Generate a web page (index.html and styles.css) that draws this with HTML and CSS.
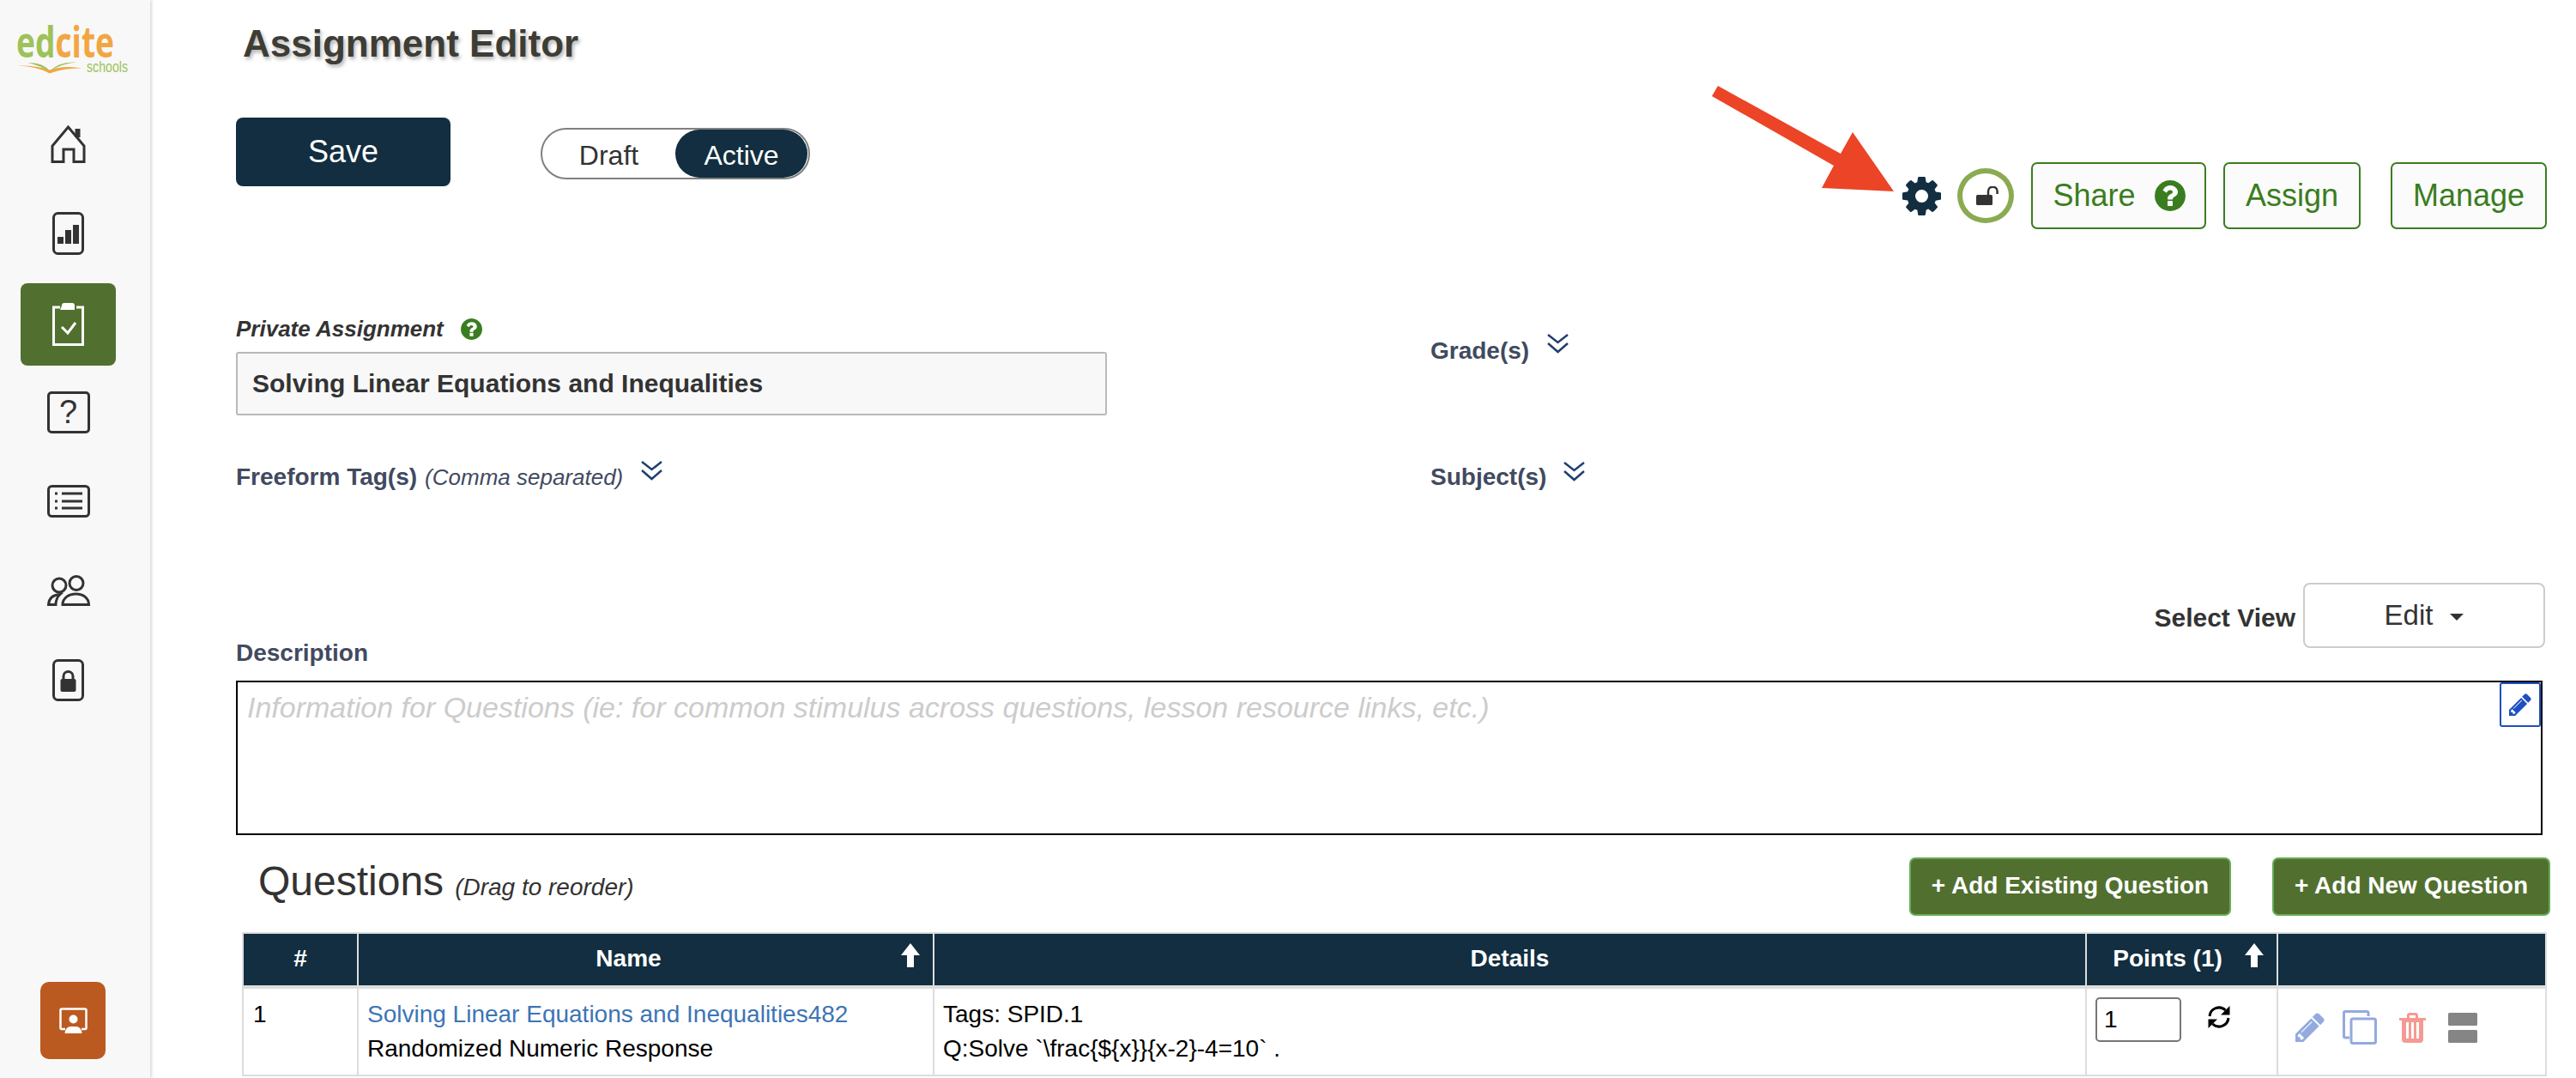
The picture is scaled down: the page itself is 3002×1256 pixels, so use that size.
FILE: index.html
```html
<!DOCTYPE html>
<html lang="en">
<head>
<meta charset="utf-8">
<title>Assignment Editor</title>
<link rel="stylesheet" href="styles.css">
</head>
<body>
<div class="app">
  <aside class="sidebar">
    <svg class="logo" viewBox="0 0 175 116" width="175" height="116">
      <text class="logo-word" x="19" y="67" textLength="114" lengthAdjust="spacingAndGlyphs"><tspan class="logo-ed">ed</tspan><tspan class="logo-cite">cite</tspan></text>
      <text class="logo-sub" x="101" y="84" textLength="48" lengthAdjust="spacingAndGlyphs">schools</text>
      <path class="logo-orange" d="M20 76.500Q42 77 58 85.500Q74 79 96 79.500Q74 75.500 58 81.500Q42 76 20 76.500Z"/>
      <path class="logo-green" d="M33 73Q50 72.500 58 83Q47 77 33 73ZM58 83Q68 71.500 89 72.500Q72 74 58 83Z"/>
    </svg>
    <nav class="nav">
      <a class="nav-item">
        <svg class="ico" width="41" height="44" viewBox="0 0 41 44"><path d="M2 42.500V24L20.500 2L39 24V42.500H27V28H15V42.500Z"/><path class="thick" d="M31.500 4V14"/></svg>
      </a>
      <a class="nav-item">
        <svg class="ico" width="37" height="50" viewBox="0 0 37 50"><rect x="1.500" y="1.500" width="34" height="47" rx="5"/><path class="fill" d="M6 29h7v8H6zM15 21h7v16h-7zM24 15h7v22h-7z"/></svg>
      </a>
      <a class="nav-item nav-active">
        <svg class="ico ico-white" width="37" height="50" viewBox="0 0 37 50"><path d="M9 5H1.500V48.500H35.500V5H28"/><path class="fill" d="M11 3q0-3 3-3h9q3 0 3 3v5H9z"/><path d="M11 28l7 7L27 23"/></svg>
      </a>
      <a class="nav-item"><span class="q-box">?</span></a>
      <a class="nav-item">
        <svg class="ico" width="50" height="38" viewBox="0 0 50 38"><rect x="1.500" y="1.500" width="47" height="35" rx="4"/><path d="M17 10H41M17 19H41M17 27H41"/><path class="fill" d="M9 8.500h3v3H9zM9 17.500h3v3H9zM9 25.500h3v3H9z"/></svg>
      </a>
      <a class="nav-item">
        <svg class="ico" width="50" height="36" viewBox="0 0 50 36"><circle cx="14" cy="12" r="8"/><circle cx="34" cy="9.500" r="8"/><path d="M18 34.500C18 27 25 22 33.500 22S48.500 27 48.500 34.500Z"/><path d="M1.500 34.500C2 27 7 23 15 22.500Q10 27 10 34.500Z"/></svg>
      </a>
      <a class="nav-item">
        <svg class="ico" width="37" height="49" viewBox="0 0 37 49"><rect x="1.500" y="1.500" width="34" height="46" rx="5"/><path class="fill" d="M9.500 25q0-2 2-2h14q2 0 2 2v11q0 2-2 2h-14q-2 0-2-2z"/><path d="M13 24v-4a5.500 5.500 0 0 1 11 0v4"/></svg>
      </a>
    </nav>
    <a class="present-btn">
      <svg class="ico ico-white-thin" width="33" height="30" viewBox="0 0 33 30"><path d="M7 25H3Q1.500 25 1.500 23.500V3Q1.500 1.500 3 1.500H30Q31.500 1.500 31.500 3V23.500Q31.500 25 30 25H26"/><path class="fill" d="M6.500 30q1-8 7-8h6q6 0 7 8z"/><circle class="fill" cx="16.500" cy="13.500" r="5"/></svg>
    </a>
  </aside>

  <main class="main">
    <h1 class="page-title">Assignment Editor</h1>

    <div class="actions">
      <button class="save-btn">Save</button>
      <div class="toggle">
        <span class="toggle-seg">Draft</span>
        <span class="toggle-seg toggle-on">Active</span>
      </div>
      <div class="toolbar">
        <svg class="gear" width="45" height="45" viewBox="128 128 1536 1536"><path d="M1152 896q0-106-75-181t-181-75-181 75-75 181 75 181 181 75 181-75 75-181zm512-109v222q0 12-8 23t-20 13l-185 28q-19 54-39 91 35 50 107 138 10 12 10 25t-9 23q-27 37-99 108t-94 71q-12 0-26-9l-138-108q-44 23-91 38-16 136-29 186-7 28-36 28h-222q-14 0-24.500-8.500t-11.500-21.500l-28-184q-49-16-90-37l-141 107q-10 9-25 9-14 0-25-11-126-114-165-168-7-10-7-23 0-12 8-23 15-21 51-66.500t54-70.500q-27-50-41-99l-183-27q-13-2-21-12.500t-8-23.500v-222q0-12 8-23t19-13l186-28q14-46 39-92-40-57-107-138-10-12-10-24 0-10 9-23 26-36 98.500-107.500t94.500-71.500q13 0 26 10l138 107q44-23 91-38 16-136 29-186 7-28 36-28h222q14 0 24.500 8.500t11.500 21.500l28 184q49 16 90 37l142-107q9-9 24-9 13 0 25 10 129 119 165 170 7 8 7 22 0 12-8 23-15 21-51 66.500t-54 70.500q26 50 41 98l183 28q13 2 21 12.500t8 23.500z"/></svg>
        <span class="lock-ring">
          <svg width="26" height="22" viewBox="0 0 26 22"><rect x="0" y="10" width="19" height="12" rx="1.500" fill="#333"/><path d="M14 10V6a5.300 5.300 0 0 1 10.600 0V9" fill="none" stroke="#333" stroke-width="2.500"/></svg>
        </span>
        <a class="out-btn out-share">Share
          <svg class="help help-lg" viewBox="128 128 1536 1536"><use href="#q-circle"/></svg>
        </a>
        <a class="out-btn out-assign">Assign</a>
        <a class="out-btn out-manage">Manage</a>
      </div>
    </div>

    <div class="form-grid">
      <div class="form-left">
        <div class="label-row">
          <label class="label-private">Private Assignment</label>
          <svg class="help help-sm" viewBox="128 128 1536 1536"><path id="q-circle" d="M1024 1376v-192q0-14-9-23t-23-9h-192q-14 0-23 9t-9 23v192q0 14 9 23t23 9h192q14 0 23-9t9-23zm256-672q0-88-55.500-163t-138.500-116-170-41q-243 0-371 213-15 24 8 42l132 100q7 6 19 6 16 0 25-12 53-68 86-92 34-24 86-24 48 0 85.500 26t37.500 59q0 38-20 61t-68 45q-63 28-115.500 86.500t-52.500 125.500v36q0 14 9 23t23 9h192q14 0 23-9t9-23q0-19 21.500-49.500t54.500-49.500q32-18 49-28.500t46-35 44.500-48 28-60.500 12.500-81zm384 192q0 209-103 385.500t-279.500 279.500-385.500 103-385.500-103-279.500-279.500-103-385.500 103-385.500 279.500-279.500 385.500-103 385.500 103 279.500 279.500 103 385.500z"/></svg>
        </div>
        <div class="title-input">Solving Linear Equations and Inequalities</div>
        <div class="field-row field-tags">
          <span class="field-label">Freeform Tag(s)</span>
          <em class="field-note">(Comma separated)</em>
          <svg class="chev chev-tags" width="27" height="24" viewBox="0 0 27 24"><path d="M2 2L13.500 11L25 2M2 12L13.500 22L25 12"/></svg>
        </div>
      </div>
      <div class="form-right">
        <div class="field-row">
          <span class="field-label">Grade(s)</span>
          <svg class="chev chev-grade" width="27" height="24" viewBox="0 0 27 24"><path d="M2 2L13.500 11L25 2M2 12L13.500 22L25 12"/></svg>
        </div>
        <div class="field-row field-subject">
          <span class="field-label">Subject(s)</span>
          <svg class="chev chev-subject" width="27" height="24" viewBox="0 0 27 24"><path d="M2 2L13.500 11L25 2M2 12L13.500 22L25 12"/></svg>
        </div>
      </div>
    </div>

    <div class="view-row">
      <span class="field-label desc-label">Description</span>
      <div class="view-pick">
        <span class="view-label">Select View</span>
        <button class="view-btn">Edit<i class="caret"></i></button>
      </div>
    </div>

    <div class="desc-box">
      <span class="placeholder">Information for Questions (ie: for common stimulus across questions, lesson resource links, etc.)</span>
      <a class="desc-edit">
        <svg width="26" height="26" viewBox="128 128 1536 1536"><path d="M491 1536l91-91-235-235-91 91v107h128v128h107zm523-928q0-22-22-22-10 0-17 7l-542 542q-7 7-7 17 0 22 22 22 10 0 17-7l542-542q7-7 7-17zm-54-192l416 416-832 832h-416v-416zm683 96q0 53-37 90l-166 166-416-416 166-165q36-38 90-38 53 0 91 38l235 234q37 39 37 91z"/></svg>
      </a>
    </div>

    <div class="q-head">
      <h2 class="q-title">Questions<em class="q-note">(Drag to reorder)</em></h2>
      <a class="add-btn add-existing">+ Add Existing Question</a>
      <a class="add-btn add-new">+ Add New Question</a>
    </div>

    <table class="q-table">
      <colgroup>
        <col class="c-num"><col class="c-name"><col class="c-details"><col class="c-points"><col class="c-actions">
      </colgroup>
      <thead>
        <tr>
          <th>#</th>
          <th class="th-name">Name<svg class="sort" width="22" height="28" viewBox="0 0 22 28"><path d="M11 0L22 14H15V28H7V14H0Z"/></svg></th>
          <th>Details</th>
          <th class="th-points">Points (1)<svg class="sort" width="22" height="28" viewBox="0 0 22 28"><path d="M11 0L22 14H15V28H7V14H0Z"/></svg></th>
          <th></th>
        </tr>
      </thead>
      <tbody>
        <tr>
          <td class="td-num">1</td>
          <td><a class="q-link">Solving Linear Equations and Inequalities482</a><br>Randomized Numeric Response</td>
          <td>Tags: SPID.1<br>Q:Solve `\frac{${x}}{x-2}-4=10` .</td>
          <td class="td-points">
            <div class="points-wrap">
              <input class="points-input" type="text" value="1">
              <svg class="refresh" width="28" height="28" viewBox="0 0 28 28"><path d="M3 13A11 11 0 0 1 21.500 6"/><path d="M25 15A11 11 0 0 1 6.500 22"/><path class="fill" d="M26.500 1V11.500H16ZM1.500 27V16.500H12Z"/></svg>
            </div>
          </td>
          <td class="td-actions">
            <div class="row-icons">
              <svg class="i-pencil" width="34" height="34" viewBox="128 128 1536 1536"><path d="M491 1536l91-91-235-235-91 91v107h128v128h107zm523-928q0-22-22-22-10 0-17 7l-542 542q-7 7-7 17 0 22 22 22 10 0 17-7l542-542q7-7 7-17zm-54-192l416 416-832 832h-416v-416zm683 96q0 53-37 90l-166 166-416-416 166-165q36-38 90-38 53 0 91 38l235 234q37 39 37 91z"/></svg>
              <svg class="i-copy" width="40" height="40" viewBox="0 0 40 40"><path d="M8 32H3Q1.500 32 1.500 30.500V3Q1.500 1.500 3 1.500H28Q30 1.500 30 3V7"/><rect x="10" y="10" width="28.500" height="28.500" rx="2"/></svg>
              <svg class="i-trash" width="31" height="35" viewBox="0 0 31 35"><path fill-rule="evenodd" d="M0 6H9V3Q9 0 12 0H19Q22 0 22 3V6H31V9H28V31Q28 35 24 35H7Q3 35 3 31V9H0ZM12 6H19V3H12ZM8 11V30H11V11ZM14 11V30H17V11ZM20 11V30H23V11Z"/></svg>
              <svg class="i-split" width="34" height="35" viewBox="0 0 34 35"><rect width="34" height="15" rx="1.500"/><rect y="20" width="34" height="15" rx="1.500"/></svg>
            </div>
          </td>
        </tr>
      </tbody>
    </table>
  </main>
</div>
<svg class="callout" width="220" height="130" viewBox="1990 95 220 130"><polygon points="2002,100 2145,179 2159,154 2207,223 2123,219 2137,193 1995,112"/></svg>
</body>
</html>
```
FILE: styles.css
```css
* { box-sizing: border-box; }
html, body { margin: 0; padding: 0; height: 100%; }
body {
  font-family: "Liberation Sans", Arial, sans-serif;
  background: #fff;
  color: #000;
  overflow: hidden;
  position: relative;
}
.app { display: flex; height: 1256px; }

/* Sidebar */
.sidebar {
  width: 175px;
  flex: none;
  display: flex;
  flex-direction: column;
  background: #f8f8f8;
  box-shadow: 2px 0 3px #dcdcdc;
}
.logo { display: block; flex: none; }
.logo-word { font-family: "Open Sans", sans-serif; font-size: 50px; font-weight: 700; }
.logo-ed { fill: #9dc25a; }
.logo-cite { fill: #f2a642; }
.logo-sub { font-family: "Liberation Sans", sans-serif; font-size: 18px; fill: #9dc25a; }
.logo-orange { fill: #f2a642; }
.logo-green { fill: #9dc25a; }

.nav { display: flex; flex-direction: column; }
.nav-item {
  width: 111px;
  height: 104px;
  margin-left: 24px;
  display: flex;
  align-items: center;
  justify-content: center;
}
.nav-active {
  height: 96px;
  margin: 6px 0 2px 24px;
  background: #517030;
  border-radius: 8px;
}
.ico { fill: none; stroke: #333; stroke-width: 3; display: block; }
.ico .fill { fill: #333; stroke: none; }
.ico .thick { stroke-width: 6; }
.ico-white { stroke: #fff; }
.ico-white .fill { fill: #fff; }
.ico-white-thin { stroke: #fff; stroke-width: 2.500; }
.ico-white-thin .fill { fill: #fff; }
.q-box {
  width: 50px;
  height: 49px;
  border: 3px solid #333;
  border-radius: 5px;
  display: flex;
  align-items: center;
  justify-content: center;
  font-size: 38px;
  color: #333;
}
.present-btn {
  width: 76px;
  height: 90px;
  margin: auto 0 22px 47px;
  background: #bb5a20;
  border-radius: 10px;
  display: flex;
  align-items: center;
  justify-content: center;
}

/* Main */
.main {
  flex: 1;
  min-width: 0;
  padding: 21px 34px 0 100px;
}
.page-title {
  margin: 0 0 0 8px;
  font-size: 44px;
  line-height: 60px;
  font-weight: 700;
  color: #3d3d36;
  text-shadow: 2px 3px 4px rgba(0, 0, 0, .3);
}
.actions { display: flex; align-items: flex-start; height: 130px; margin-top: 56px; }
.save-btn {
  width: 250px;
  height: 80px;
  border: 0;
  border-radius: 8px;
  background: #122e40;
  color: #fff;
  font: 36px "Liberation Sans", sans-serif;
  padding: 0;
}
.toggle {
  width: 314px;
  height: 60px;
  margin: 12px 0 0 105px;
  border: 2px solid #808080;
  border-radius: 30px;
  display: flex;
  font-size: 32px;
  color: #333;
}
.toggle-seg { flex: 1; display: flex; align-items: center; justify-content: center; padding-top: 5px; }
.toggle-on { flex: none; width: 154px; margin-right: 1px; background: #122e40; color: #fff; border-radius: 28px; }
.toolbar { display: flex; align-items: center; margin: 52px 0 0 auto; height: 78px; }
.gear { fill: #122e40; display: block; margin-right: 19px; }
.lock-ring {
  width: 66px;
  height: 64px;
  padding-left: 3px;
  border: 6px solid #8aab50;
  border-radius: 50%;
  display: flex;
  align-items: center;
  justify-content: center;
  margin-right: 20px;
}
.out-btn {
  height: 78px;
  border: 2px solid #3a7d20;
  border-radius: 7px;
  background: #fbfbfb;
  color: #3a7d20;
  font-size: 36px;
  display: flex;
  align-items: center;
  justify-content: center;
}
.out-share { width: 204px; margin-right: 20px; gap: 22px; padding-left: 1px; }
.out-assign { width: 160px; margin-right: 35px; }
.out-manage { width: 182px; }
.help { fill: #3a7d20; display: block; }
.help-lg { width: 36px; height: 36px; }
.help-sm { width: 25px; height: 25px; }

/* Form */
.form-grid { display: grid; grid-template-columns: 1392px 1fr; }
.form-left { padding-top: 101px; }
.form-right { padding-top: 124px; }
.label-row { display: flex; align-items: center; gap: 20px; height: 30px; }
.label-private { font-size: 26px; font-weight: 700; font-style: italic; color: #333; }
.title-input {
  width: 1015px;
  height: 74px;
  margin-top: 12px;
  padding-left: 17px;
  border: 2px solid #b9b9b9;
  border-radius: 3px;
  background: #f8f8f8;
  display: flex;
  align-items: center;
  font-size: 30px;
  font-weight: 700;
  color: #333;
}
.field-row { display: flex; align-items: flex-start; line-height: 36px; height: 36px; }
.field-tags { margin-top: 54px; }
.field-subject { margin-top: 111px; }
.field-label { font-size: 28px; font-weight: 700; color: #414a60; line-height: 36px; }
.field-note { font-size: 26px; color: #414a60; margin-left: 9px; }
.chev { fill: none; stroke: #1f3f6e; stroke-width: 2.500; display: block; }
.chev-tags { margin: -2px 0 0 20px; }
.chev-grade { margin: -3px 0 0 20px; }
.chev-subject { margin: -1px 0 0 19px; }

.view-row { display: flex; justify-content: space-between; height: 114px; margin-top: 105px; }
.desc-label { align-self: flex-end; margin-bottom: 14px; }
.view-pick { display: flex; align-items: center; gap: 9px; align-self: flex-start; margin-right: 2px; }
.view-label { font-size: 30px; font-weight: 700; color: #333; padding-top: 5px; }
.view-btn {
  width: 282px;
  height: 76px;
  border: 2px solid #ccc;
  border-radius: 8px;
  background: #fff;
  color: #333;
  font: 33px "Liberation Sans", sans-serif;
  display: flex;
  align-items: center;
  justify-content: center;
  gap: 20px;
  padding: 0;
}
.caret { width: 0; height: 0; border: 8px solid transparent; border-top-color: #333; border-bottom: 0; margin-top: 4px; }

.desc-box {
  position: relative;
  height: 180px;
  margin-right: 5px;
  padding: 9px 11px;
  border: 2px solid #000;
}
.placeholder { font-size: 34px; line-height: 40px; font-style: italic; color: #ccc; }
.desc-edit {
  position: absolute;
  top: 0;
  right: 0;
  width: 48px;
  height: 52px;
  border: 2px solid #1f4fc0;
  border-radius: 3px;
  background: #fff;
  display: flex;
  align-items: center;
  justify-content: center;
}
.desc-edit svg { fill: #1f4fc0; }

/* Questions */
.q-head { display: flex; align-items: flex-start; height: 68px; margin-top: 26px; }
.q-title { margin: 0 auto 0 26px; font-size: 48px; line-height: 56px; font-weight: 400; color: #333; }
.q-note { font-size: 28px; margin-left: 13px; }
.add-btn {
  height: 68px;
  padding-bottom: 2px;
  border: 2px solid #68ab57;
  border-radius: 7px;
  background: #517030;
  color: #fff;
  font-size: 28px;
  font-weight: 700;
  display: flex;
  align-items: center;
  justify-content: center;
}
.add-existing { width: 375px; margin-right: 48px; }
.add-new { width: 324px; margin-right: -4px; }

.q-table {
  width: 2686px;
  margin: 19px 0 0 7px;
  table-layout: fixed;
  border-collapse: separate;
  border-spacing: 0;
  border-top: 2px solid #ddd;
  border-left: 2px solid #ddd;
  font-size: 28px;
}
.c-num { width: 134px; }
.c-name { width: 671px; }
.c-details { width: 1343px; }
.c-points { width: 223px; }
.c-actions { width: 313px; }
.q-table th {
  position: relative;
  height: 64px;
  padding: 0 0 2px;
  background: #122e40;
  color: #fff;
  font-weight: 700;
  text-align: center;
  border-right: 2px solid #ddd;
  border-bottom: 4px solid #ddd;
}
.q-table .th-name { padding-right: 40px; }
.q-table .th-points { padding-right: 33px; }
.sort { position: absolute; top: 11px; right: 15px; fill: #fff; }
.q-table td {
  height: 102px;
  padding: 10px 10px 0;
  vertical-align: top;
  line-height: 40px;
  border-right: 2px solid #ddd;
  border-bottom: 2px solid #ddd;
}
.q-table .td-num { padding-left: 11px; }
.q-link { color: #3d75b5; }
.q-table .td-points { padding-top: 10px; }
.points-wrap { display: flex; align-items: flex-start; }
.points-input {
  width: 100px;
  height: 52px;
  padding: 0 8px;
  border: 2px solid #767676;
  border-radius: 5px;
  font: 28px "Liberation Sans", sans-serif;
  color: #000;
}
.refresh { margin: 9px 0 0 30px; fill: none; stroke: #000; stroke-width: 3; flex: none; }
.refresh .fill { fill: #000; stroke: none; }
.q-table .td-actions { padding: 25px 0 0 20px; }
.row-icons { display: flex; align-items: center; height: 40px; }
.i-pencil { fill: #93aadf; margin-right: 21px; }
.i-copy { fill: none; stroke: #93aadf; stroke-width: 3; margin-right: 26px; }
.i-trash { fill: #f59a93; margin-right: 26px; }
.i-split { fill: #858585; }

/* Annotation drawn on top of the screenshot */
.callout { position: absolute; left: 1990px; top: 95px; }
.callout polygon { fill: #ec4427; }
```
